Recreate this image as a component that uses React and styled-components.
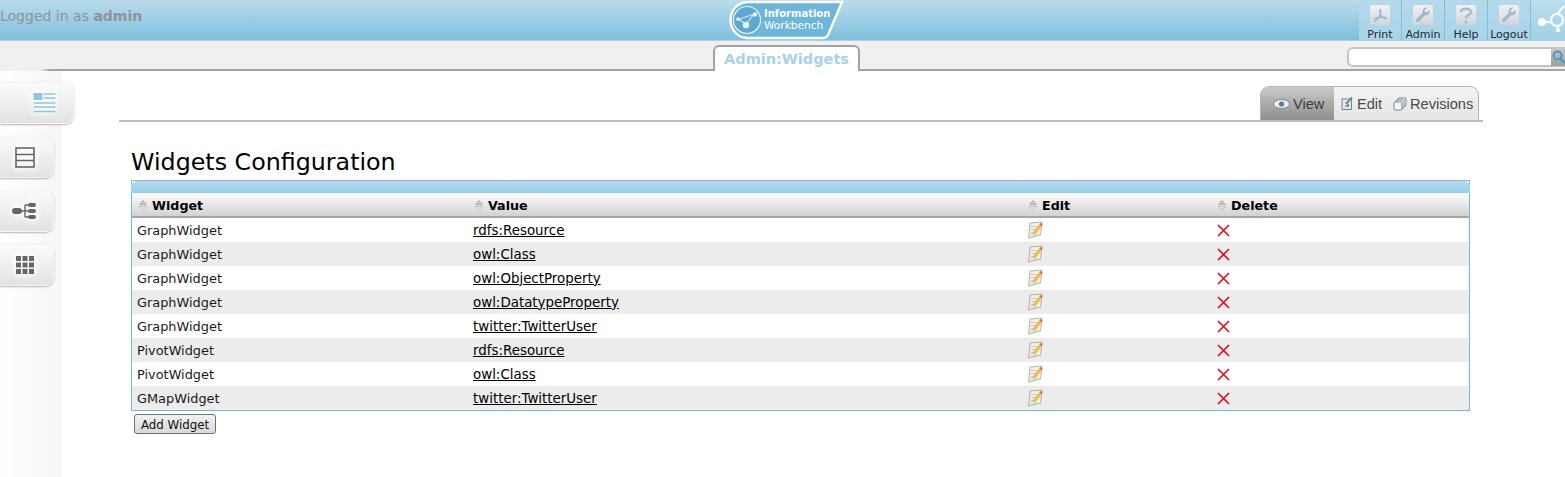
import React from "react";
import styled, { createGlobalStyle } from "styled-components";

const GlobalStyle = createGlobalStyle`
  html, body {
    margin: 0;
    height: 477px;
    overflow: hidden;
    background: white;
    font-family: "DejaVu Sans", Verdana, sans-serif;
  }
`;

const Page = styled.div`
  display: flex;
  flex-direction: column;
  height: 477px;
`;

const Header = styled.div`
  display: grid;
  grid-template-columns: 729px auto 1fr;
  height: 40px;
  background: linear-gradient(#b9dcec, #7fbfdd);
  border-bottom: 1px solid #a5d3e8;
`;

const LoggedIn = styled.div`
  font-size: 14px;
  color: #8f9499;
  line-height: 33px;
  b {
    font-weight: bold;
  }
`;

const Logo = styled.svg`
  display: block;
`;

const HeaderRight = styled.div`
  display: flex;
  justify-content: flex-end;
`;

const NavItem = styled.div`
  width: 42px;
  margin-right: 1px;
  height: 40px;
  display: flex;
  flex-direction: column;
  align-items: center;
  background: linear-gradient(#b4d9ea, #a9d4e8);
  box-shadow: 1px 0 0 #7fbfdd;
  font-size: 11px;
  color: #1c2a33;
  padding-top: 5px;
  box-sizing: border-box;
  gap: 3px;
  white-space: nowrap;
`;

const NavIcon = styled.div`
  width: 20px;
  height: 20px;
  flex: none;
  border-radius: 2px;
  background: linear-gradient(#f0f1f3, #cfd5dc);
  display: flex;
  align-items: center;
  justify-content: center;
`;

const NetworkBox = styled.div`
  width: 34px;
  height: 40px;
  background: linear-gradient(#bcdeed, #a2d0e6);
  svg {
    display: block;
  }
`;

const SubBar = styled.div`
  display: grid;
  grid-template-columns: 713px auto 1fr;
  height: 30px;
  background: #f0f0f0;
`;

const SubLeft = styled.div`
  margin-left: 40px;
  background: linear-gradient(90deg, transparent, #a3a3a3 10px) bottom / 100% 2px no-repeat;
`;

const PageTab = styled.div`
  width: 147px;
  height: 26px;
  margin-top: 4px;
  background: white;
  border: 2px solid #a3a3a3;
  border-bottom: none;
  border-radius: 6px 6px 0 0;
  color: #a7d3ea;
  font-size: 14.5px;
  font-weight: bold;
  text-align: center;
  line-height: 24px;
  box-sizing: border-box;
`;

const SubRight = styled.div`
  border-bottom: 2px solid #a3a3a3;
  display: flex;
  justify-content: flex-end;
  align-items: flex-start;
  padding-top: 6px;
`;

const SearchBox = styled.div`
  width: 218px;
  height: 20px;
  background: white;
  border: 2px solid #c4c4c4;
  border-right: none;
  border-radius: 6px 0 0 6px;
  box-sizing: border-box;
  display: flex;
  justify-content: flex-end;
`;

const SearchButton = styled.div`
  width: 14px;
  background: linear-gradient(#c9c9c9, #9c9c9c);
  margin-top: -1px;
  margin-bottom: -1px;
  display: flex;
  align-items: center;
  justify-content: center;
`;

const Body = styled.div`
  flex: 1;
  display: flex;
`;

const Sidebar = styled.div`
  width: 60px;
  flex: none;
  padding-top: 11px;
  display: flex;
  flex-direction: column;
  gap: 12px;
  background: linear-gradient(90deg, #ffffff, #f6f6f6);
  box-shadow: 1px 0 0 #f0f0f0;
`;

const SideTab = styled.div`
  width: ${p => (p.$active ? "74px" : "54px")};
  height: 42px;
  flex: none;
  background: linear-gradient(#fbfbfb, #e2e2e2);
  border: 1px solid #f4f4f4;
  border-left: none;
  border-radius: 0 9px 9px 0;
  box-shadow: 0 1px 2px #b5b5b5;
  box-sizing: border-box;
  display: flex;
  justify-content: flex-end;
  align-items: center;
  padding-right: ${p => p.$pad}px;
  svg {
    filter: drop-shadow(0 0 3px white) drop-shadow(0 0 2px white);
  }
`;

const Main = styled.div`
  flex: 1;
  padding-left: 59px;
  padding-right: 82px;
  padding-top: 15px;
`;

const ViewTabs = styled.div`
  display: flex;
  justify-content: flex-end;
  border-bottom: 2px solid #bdbdbd;
  height: 34px;
  padding-right: 4px;
`;

const ViewTabGroup = styled.div`
  display: flex;
  width: 219px;
  height: 34px;
  border: 1px solid #b5b5b5;
  border-bottom: none;
  border-radius: 9px 9px 0 0;
  overflow: hidden;
  box-sizing: border-box;
  background: linear-gradient(#f3f3f3, #e5e5e5);
`;

const ViewTab = styled.div`
  display: flex;
  align-items: center;
  gap: 3px;
  flex: none;
  box-sizing: border-box;
  width: ${p => p.$w}px;
  padding-left: ${p => p.$pad}px;
  font-family: "Liberation Sans", Arial, sans-serif;
  font-size: 14.6px;
  background: ${p => (p.$active ? "linear-gradient(#c9c9c9, #8f8f8f)" : "transparent")};
  color: ${p => (p.$active ? "#3d3d3d" : "#4a4a4a")};
  height: 100%;
`;

const Content = styled.div`
  padding-left: 12px;
`;

const Title = styled.h1`
  width: 1339px;
  font-size: 23.75px;
  font-weight: normal;
  color: #000;
  margin: 0;
  padding-top: 25px;
  padding-bottom: 3px;
  line-height: 30px;
  border-bottom: 1px solid #a9a9a9;
`;

const Panel = styled.div`
  width: 1339px;
  border: 1px solid #6dbbe0;
  border-top: none;
  box-sizing: border-box;
`;

const PanelTop = styled.div`
  height: 12px;
  margin: 0 -1px;
  border-radius: 6px 6px 0 0;
  background: linear-gradient(#b3dcef, #97cfe8);
`;

const Table = styled.table`
  width: 100%;
  border-collapse: separate;
  border-spacing: 0;
  table-layout: fixed;
`;

const Th = styled.th`
  width: ${p => p.$w || "auto"};
  height: 25px;
  padding: 2px 0 0 7px;
  box-sizing: border-box;
  text-align: left;
  font-size: 12.7px;
  font-weight: bold;
  color: #000;
  background: linear-gradient(#fdfdfd, #d2d2d2);
  border-bottom: 2px solid #a5a5a5;
`;

const ThInner = styled.span`
  display: flex;
  align-items: center;
  gap: 5px;
`;

const Tr = styled.tr`
  background: ${p => (p.$alt ? "#ececec" : "#fff")};
`;

const Td = styled.td`
  height: 24px;
  box-sizing: border-box;
  padding: 0 0 0 5px;
  font-size: 12.9px;
  color: #1a1a1a;
  white-space: nowrap;
  a {
    color: #000;
    font-size: 13.4px;
    text-decoration: underline;
  }
`;

const IconCell = styled(Td)`
  padding-left: ${p => p.$pad}px;
  line-height: 0;
  svg {
    display: block;
  }
`;

const Button = styled.button`
  display: block;
  margin: 3px 0 0 3px;
  width: 82px;
  height: 20px;
  padding: 1px 0 0;
  font-family: "DejaVu Sans", Verdana, sans-serif;
  font-size: 11.8px;
  color: #111;
  border: 1px solid #707070;
  border-radius: 3px;
  background: linear-gradient(#f2f2f2, #d8d8d8);
`;

const SortIcon = () => (
  <svg width="8" height="11" viewBox="0 0 8 11">
    <path d="M4 0.5 L7.5 4.5 H0.5 Z" fill="#c4c4c4" stroke="#999" strokeWidth="0.6" />
    <path d="M4 10.5 L7.5 6.5 H0.5 Z" fill="#e4e4e4" stroke="#aaa" strokeWidth="0.6" />
  </svg>
);

const EditIcon = () => (
  <svg width="17" height="18" viewBox="0 0 17 18">
    <path d="M3 2 L15 1 L13.5 14 L1.5 17 Z" fill="#efefe9" stroke="#a3a39a" strokeWidth="0.8" />
    <path d="M4 5.5 H12 M3.8 8.5 H11 M3.4 11.5 H10 M3 14 H11" stroke="#c3c3bc" strokeWidth="0.8" />
    <path d="M6.5 11 L12.5 3.5 L14.5 5 L8.5 12.5 L6 13 Z" fill="#f3bf3a" stroke="#cf9a22" strokeWidth="0.4" />
    <path d="M13 2.6 L15.2 4.2" stroke="#d9534f" strokeWidth="1.5" />
  </svg>
);

const DeleteIcon = () => (
  <svg width="13" height="13" viewBox="0 0 13 13">
    <path d="M1 1 L12 12 M12 1 L1 12" stroke="#d8142c" strokeWidth="1.7" />
  </svg>
);

const PdfGlyph = () => (
  <svg width="15" height="15" viewBox="0 0 15 15" fill="none" stroke="#9fb4c2" strokeWidth="1.3">
    <path d="M7 1 C6.5 4 7 6 8 8 C9 9.5 11 10.5 14 11 M7 1 C8.5 3 7.5 6 6.5 8 C5 10.5 3 12.5 1 14 M1 11 C4 9.5 9 8.5 13 9.5" />
  </svg>
);

const WrenchGlyph = () => (
  <svg width="16" height="16" viewBox="0 0 16 16">
    <path d="M14.5 3 L11.8 5.6 L10 5 L9.6 3.2 L12.3 0.8 C9.8 0 7.4 1.8 7.6 4.6 C7.6 5.2 7.8 5.8 7.8 5.8 L1.6 12 C0.8 12.8 1 13.9 1.6 14.5 C2.4 15.1 3.3 15 4 14.4 L10 8.2 C12.8 9 15.4 6.4 14.5 3 Z" fill="#9fb9c8" />
  </svg>
);

const HelpGlyph = () => (
  <svg width="14" height="17" viewBox="0 0 14 17" fill="none" stroke="#aabcc8" strokeWidth="2.6">
    <path d="M2 5 C2 1 12 0.5 12 5 C12 8 7 7.5 7 11.5" />
    <path d="M7 13.5 V16.5" />
  </svg>
);

const NetworkGlyph = () => (
  <svg width="34" height="40" viewBox="0 0 34 40" fill="none" stroke="white" strokeWidth="2.2">
    <path d="M11 22 H20 M26 14 L33 6 M26.5 26 L27 30" />
    <circle cx="26" cy="20" r="6" />
    <circle cx="11" cy="22" r="4" fill="white" stroke="none" />
    <circle cx="27" cy="30" r="2.2" fill="white" stroke="none" />
  </svg>
);

const SearchGlyph = () => (
  <svg width="13" height="14" viewBox="0 0 13 14" fill="none">
    <circle cx="5.5" cy="5.5" r="4" stroke="#3d9bc7" strokeWidth="1.8" />
    <path d="M8.5 8.5 L12.5 13" stroke="#3d9bc7" strokeWidth="2.2" />
  </svg>
);

const ListIcon = () => (
  <svg width="23" height="22" viewBox="0 0 23 22">
    <rect x="0.5" y="1" width="9" height="7" fill="#8cc6e2" />
    <path d="M11 2 H22.5 M11 6 H22.5 M0.5 11 H22.5 M0.5 15 H22.5 M0.5 19.5 H22.5" stroke="#8cc6e2" strokeWidth="1.6" />
  </svg>
);

const RowsIcon = () => (
  <svg width="20" height="21" viewBox="0 0 20 21" fill="none" stroke="#666" strokeWidth="1.6">
    <rect x="1" y="1" width="18" height="19" />
    <path d="M1 7.5 H19 M1 13.5 H19" />
  </svg>
);

const TreeIcon = () => (
  <svg width="24" height="18" viewBox="0 0 24 18">
    <rect x="0" y="6" width="10" height="6" rx="3" fill="#666" />
    <path d="M10 9 H13 M13 3 V15 M13 3 H17 M13 15 H17 M13 9 H17" stroke="#666" strokeWidth="1.4" fill="none" />
    <rect x="16" y="1" width="8" height="4" rx="2" fill="#666" />
    <rect x="16" y="7" width="8" height="4" rx="2" fill="#666" />
    <rect x="16" y="13" width="8" height="4" rx="2" fill="#666" />
  </svg>
);

const GridIcon = () => (
  <svg width="18" height="18" viewBox="0 0 18 18" fill="#666">
    {[0, 6.5, 13].flatMap(y =>
      [0, 6.5, 13].map(x => <rect key={`${x}-${y}`} x={x} y={y} width="5" height="5" />)
    )}
  </svg>
);

const EyeIcon = () => (
  <svg width="17" height="10" viewBox="0 0 17 10">
    <ellipse cx="8.5" cy="5" rx="8" ry="4.5" fill="#e8eef2" stroke="#6f8796" />
    <circle cx="8.5" cy="5" r="2.6" fill="#5d7d90" />
  </svg>
);

const EditTabIcon = () => (
  <svg width="13" height="15" viewBox="0 0 13 15" fill="none">
    <rect x="1" y="3" width="9.5" height="10.5" fill="#dfe6ea" stroke="#6f8796" />
    <path d="M3.5 10.5 H8 V8 Z" fill="#55707f" />
    <path d="M5 8 L11 1.5" stroke="#6f8796" strokeWidth="2" />
  </svg>
);

const RevisionsIcon = () => (
  <svg width="14" height="14" viewBox="0 0 14 14" fill="#f4f6f7" stroke="#6f8796">
    <rect x="5" y="1" width="8" height="8" rx="1" />
    <rect x="3" y="3" width="8" height="8" rx="1" />
    <rect x="1" y="5" width="8" height="8" rx="1" />
  </svg>
);

const LogoMark = () => (
  <Logo width="116" height="40" viewBox="0 0 116 40">
    <path
      d="M19 2 H113 L99 35 C98 37 96 38 94 38 H19 C9 38 1.5 30 1.5 20 C1.5 10 9 2 19 2 Z"
      fill="#6db5da"
      stroke="white"
      strokeWidth="2.5"
    />
    <circle cx="18" cy="20" r="13.5" fill="#5ea8cf" stroke="#e6f4fa" strokeWidth="1.2" />
    <path d="M9 19 L17 24 M11 19 L25 14 M17 24 L25 14" stroke="#cfe9f5" strokeWidth="1.2" fill="none" />
    <circle cx="17" cy="25" r="3.2" fill="#e8f5fb" />
    <circle cx="26" cy="14.5" r="2.2" fill="#e8f5fb" />
    <circle cx="9" cy="19" r="1.8" fill="#e8f5fb" />
    <text x="35" y="17" fontSize="10" fontWeight="bold" fill="white" fontFamily="DejaVu Sans, sans-serif">
      Information
    </text>
    <text x="35" y="29" fontSize="10.6" fill="white" fontFamily="DejaVu Sans, sans-serif">
      Workbench
    </text>
  </Logo>
);

const navItems = [
  { label: "Print", icon: <PdfGlyph /> },
  { label: "Admin", icon: <WrenchGlyph /> },
  { label: "Help", icon: <HelpGlyph /> },
  { label: "Logout", icon: <WrenchGlyph /> }
];

const sideTabs = [
  { id: "list", pad: 17, icon: <ListIcon /> },
  { id: "rows", pad: 18, icon: <RowsIcon /> },
  { id: "tree", pad: 17, icon: <TreeIcon /> },
  { id: "grid", pad: 19, icon: <GridIcon /> }
];

const rows = [
  ["GraphWidget", "rdfs:Resource"],
  ["GraphWidget", "owl:Class"],
  ["GraphWidget", "owl:ObjectProperty"],
  ["GraphWidget", "owl:DatatypeProperty"],
  ["GraphWidget", "twitter:TwitterUser"],
  ["PivotWidget", "rdfs:Resource"],
  ["PivotWidget", "owl:Class"],
  ["GMapWidget", "twitter:TwitterUser"]
];

const columns = [
  { name: "Widget", width: "336px" },
  { name: "Value", width: "554px" },
  { name: "Edit", width: "189px" },
  { name: "Delete" }
];

export default function App() {
  return (
    <Page>
      <GlobalStyle />
      <Header>
        <LoggedIn>
          Logged in as <b>admin</b>
        </LoggedIn>
        <LogoMark />
        <HeaderRight>
          {navItems.map(item => (
            <NavItem key={item.label}>
              <NavIcon>{item.icon}</NavIcon>
              {item.label}
            </NavItem>
          ))}
          <NetworkBox>
            <NetworkGlyph />
          </NetworkBox>
        </HeaderRight>
      </Header>
      <SubBar>
        <SubLeft />
        <PageTab>Admin:Widgets</PageTab>
        <SubRight>
          <SearchBox>
            <SearchButton>
              <SearchGlyph />
            </SearchButton>
          </SearchBox>
        </SubRight>
      </SubBar>
      <Body>
        <Sidebar>
          {sideTabs.map((tab, i) => (
            <SideTab key={tab.id} $active={i === 0} $pad={tab.pad}>
              {tab.icon}
            </SideTab>
          ))}
        </Sidebar>
        <Main>
          <ViewTabs>
            <ViewTabGroup>
              <ViewTab $active $w={73} $pad={12}>
                <EyeIcon /> View
              </ViewTab>
              <ViewTab $w={59} $pad={7}>
                <EditTabIcon /> Edit
              </ViewTab>
              <ViewTab $w={85} $pad={0}>
                <RevisionsIcon /> Revisions
              </ViewTab>
            </ViewTabGroup>
          </ViewTabs>
          <Content>
            <Title>Widgets Configuration</Title>
            <Panel>
              <PanelTop />
              <Table>
                <thead>
                  <tr>
                    {columns.map(c => (
                      <Th key={c.name} $w={c.width}>
                        <ThInner>
                          <SortIcon />
                          {c.name}
                        </ThInner>
                      </Th>
                    ))}
                  </tr>
                </thead>
                <tbody>
                  {rows.map(([widget, value], i) => (
                    <Tr key={i} $alt={i % 2 === 1}>
                      <Td>{widget}</Td>
                      <Td>
                        <a href="#">{value}</a>
                      </Td>
                      <IconCell $pad={5}>
                        <EditIcon />
                      </IconCell>
                      <IconCell $pad={6}>
                        <DeleteIcon />
                      </IconCell>
                    </Tr>
                  ))}
                </tbody>
              </Table>
            </Panel>
            <Button>Add Widget</Button>
          </Content>
        </Main>
      </Body>
    </Page>
  );
}
